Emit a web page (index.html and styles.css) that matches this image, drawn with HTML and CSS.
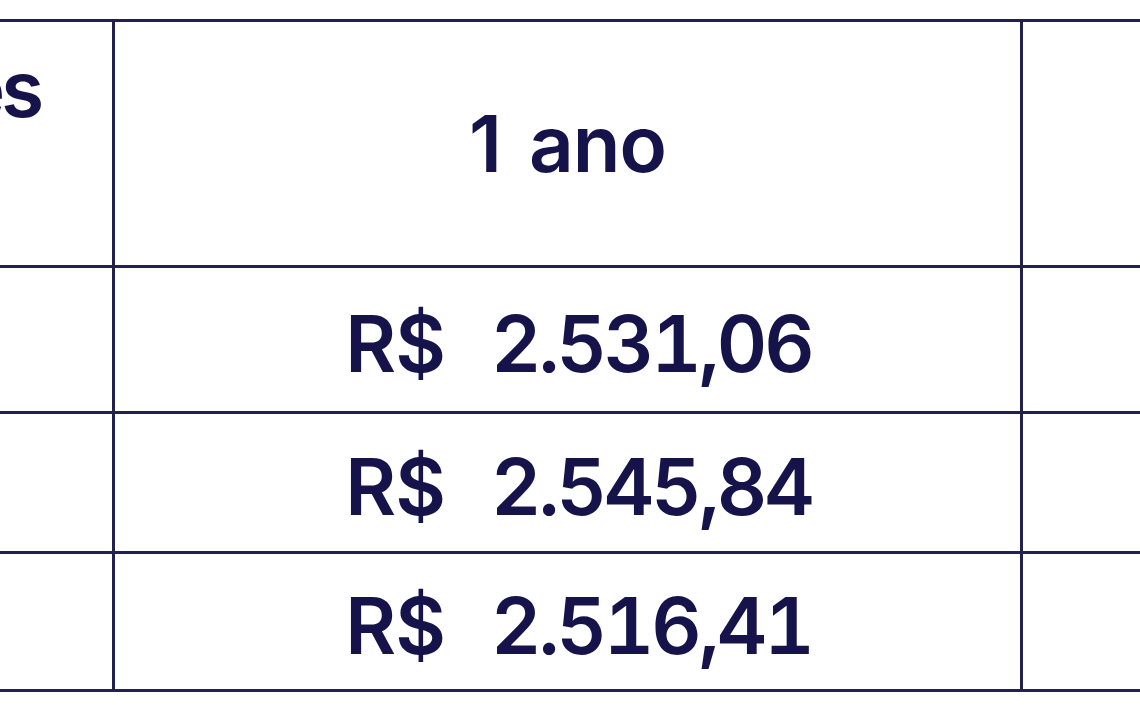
FILE: index.html
```html
<!DOCTYPE html>
<html lang="pt-BR">
<head>
<meta charset="utf-8">
<title>Tabela</title>
<link rel="stylesheet" href="styles.css">
</head>
<body>
<div class="wrap">
<table class="grid">
  <colgroup>
    <col class="c-first">
    <col class="c-mid">
    <col class="c-last">
  </colgroup>
  <thead>
    <tr class="r-head">
      <th class="first">Prestações</th>
      <th><span class="one">1</span>ano</th>
      <th class="last"></th>
    </tr>
  </thead>
  <tbody>
    <tr class="r1">
      <td></td>
      <td class="val"><span class="cur">R$</span>2.531,06</td>
      <td></td>
    </tr>
    <tr class="r2">
      <td></td>
      <td class="val"><span class="cur">R$</span>2.545,84</td>
      <td></td>
    </tr>
    <tr class="r3">
      <td></td>
      <td class="val"><span class="cur">R$</span>2.516,41</td>
      <td></td>
    </tr>
  </tbody>
</table>
</div>
</body>
</html>
```

FILE: styles.css
```css
html, body {
  margin: 0;
  padding: 0;
  background: #ffffff;
}
body {
  width: 1140px;
  height: 714px;
  overflow: hidden;
  font-family: "Inter", "Noto Sans", sans-serif;
  color: #15134a;
}
.wrap {
  padding-top: 19px;
  margin-left: -400px;
}
.grid {
  border-collapse: collapse;
  table-layout: fixed;
  width: 1700px;
}
.c-first { width: 512px; }
.c-mid { width: 908px; }
.c-last { width: 280px; }
.grid th, .grid td {
  border: 3px solid #22204f;
  padding: 0;
  text-align: center;
  vertical-align: middle;
  font-weight: 600;
  font-size: 78px;
  line-height: 1;
  letter-spacing: -1px;
}
.grid th.first {
  text-align: right;
  vertical-align: top;
  padding-top: 28px;
  padding-right: 72px;
  height: 215px;
  letter-spacing: -4px;
}
.r-head th { height: 243px; }
.r1 td { height: 143px; }
.r2 td { height: 137px; }
.r3 td { height: 135px; }
.grid td.val {
  padding-top: 8px;
  padding-left: 22px;
  letter-spacing: -3px;
  font-feature-settings: "tnum" 1;
}
.r1 td.val { height: 135px; }
.r2 td.val { height: 129px; }
.r3 td.val { height: 127px; }
.cur { margin-right: 46px; letter-spacing: -1px; }
.one { margin-right: 28px; }
```
